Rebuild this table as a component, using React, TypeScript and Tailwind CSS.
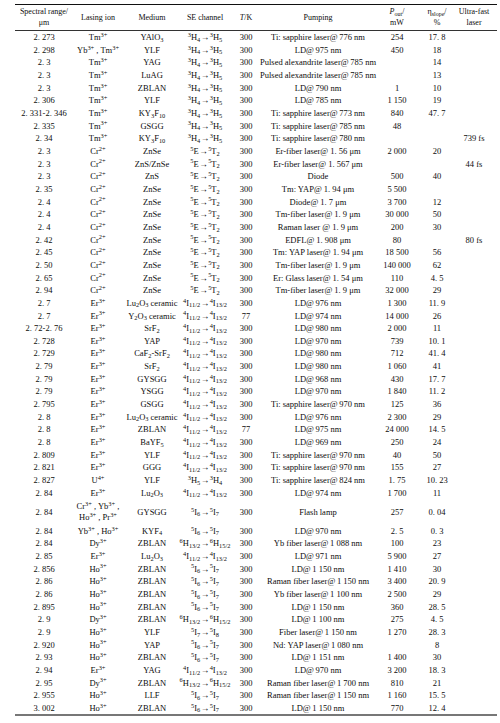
import React from "react";

type Cell = React.ReactNode;
type Row = { c: Cell[]; tall?: boolean };

const sup = (s: string) => <sup>{s}</sup>;
const sub = (s: string) => <sub>{s}</sub>;
const ion = (el: string, ch: string) => (
  <>
    {el}
    {sup(ch)}
  </>
);

const Tm = ion("Tm", "3+");
const Cr = ion("Cr", "2+");
const Er = ion("Er", "3+");
const Ho = ion("Ho", "3+");
const Dy = ion("Dy", "3+");
const U = ion("U", "4+");

const se = (a: string, A: string, sa: string, b: string, B: string, sb: string) => (
  <>
    {sup(a)}
    {A}
    {sub(sa)}
    <span className="mx-[0.5px]">→</span>
    {sup(b)}
    {B}
    {sub(sb)}
  </>
);

const TH = se("3", "H", "4", "3", "H", "5");
const CR = se("5", "E", "", "5", "T", "2");
const ER = se("4", "I", "11/2", "4", "I", "13/2");
const UH = se("3", "H", "5", "3", "H", "4");
const HO = se("5", "I", "6", "5", "I", "7");
const HO2 = se("5", "I", "7", "5", "I", "8");
const DY = se("6", "H", "13/2", "6", "H", "15/2");

const f = (parts: (string | [string])[]) => (
  <>
    {parts.map((p, i) =>
      typeof p === "string" ? <React.Fragment key={i}>{p}</React.Fragment> : <sub key={i}>{p[0]}</sub>
    )}
  </>
);

const YAlO3 = f(["YAlO", ["3"]]);
const KY3F10 = f(["KY", ["3"], "F", ["10"]]);
const Lu2O3 = f(["Lu", ["2"], "O", ["3"]]);
const Lu2O3c = f(["Lu", ["2"], "O", ["3"], " ceramic"]);
const Y2O3c = f(["Y", ["2"], "O", ["3"], " ceramic"]);
const SrF2 = f(["SrF", ["2"]]);
const CaSr = f(["CaF", ["2"], "-SrF", ["2"]]);
const BaYF5 = f(["BaYF", ["5"]]);
const KYF4 = f(["KYF", ["4"]]);

const th = "\u2009";

const rows: Row[] = [
  { c: ["2. 273", Tm, YAlO3, TH, "300", `Ti: sapphire laser@${th}776 nm`, "254", "17. 8", ""] },
  { c: ["2. 298", <>Yb{sup("3+")} , Tm{sup("3+")}</>, "YLF", TH, "300", `LD@${th}975 nm`, "450", "18", ""] },
  { c: ["2. 3", Tm, "YAG", TH, "300", `Pulsed alexandrite laser@${th}785 nm`, "", "14", ""] },
  { c: ["2. 3", Tm, "LuAG", TH, "300", `Pulsed alexandrite laser@${th}785 nm`, "", "13", ""] },
  { c: ["2. 3", Tm, "ZBLAN", TH, "300", `LD@${th}790 nm`, "1", "10", ""] },
  { c: ["2. 306", Tm, "YLF", TH, "300", `LD@${th}785 nm`, "1 150", "19", ""] },
  { c: ["2. 331-2. 346", Tm, KY3F10, TH, "300", `Ti: sapphire laser@${th}773 nm`, "840", "47. 7", ""] },
  { c: ["2. 335", Tm, "GSGG", TH, "300", `Ti: sapphire laser@${th}785 nm`, "48", "", ""] },
  { c: ["2. 34", Tm, KY3F10, TH, "300", `Ti: sapphire laser@${th}780 nm`, "", "", "739 fs"] },
  { c: ["2. 3", Cr, "ZnSe", CR, "300", "Er-fiber laser@ 1. 56 μm", "2 000", "20", ""] },
  { c: ["2. 3", Cr, "ZnS/ZnSe", CR, "300", "Er-fiber laser@ 1. 567 μm", "", "", "44 fs"] },
  { c: ["2. 3", Cr, "ZnS", CR, "300", "Diode", "500", "40", ""] },
  { c: ["2. 35", Cr, "ZnSe", CR, "300", "Tm: YAP@ 1. 94 μm", "5 500", "", ""] },
  { c: ["2. 4", Cr, "ZnSe", CR, "300", "Diode@ 1. 7 μm", "3 700", "12", ""] },
  { c: ["2. 4", Cr, "ZnSe", CR, "300", "Tm-fiber laser@ 1. 9 μm", "30 000", "50", ""] },
  { c: ["2. 4", Cr, "ZnSe", CR, "300", "Raman laser @ 1. 9 μm", "200", "30", ""] },
  { c: ["2. 42", Cr, "ZnSe", CR, "300", "EDFL@ 1. 908 μm", "80", "", "80 fs"] },
  { c: ["2. 45", Cr, "ZnSe", CR, "300", "Tm: YAP laser@ 1. 94 μm", "18 500", "56", ""] },
  { c: ["2. 50", Cr, "ZnSe", CR, "300", "Tm-fiber laser@ 1. 9 μm", "140 000", "62", ""] },
  { c: ["2. 65", Cr, "ZnSe", CR, "300", "Er: Glass laser@ 1. 54 μm", "110", "4. 5", ""] },
  { c: ["2. 94", Cr, "ZnSe", CR, "300", "Tm-fiber laser@ 1. 9 μm", "32 000", "29", ""] },
  { c: ["2. 7", Er, Lu2O3c, ER, "300", `LD@${th}976 nm`, "1 300", "11. 9", ""] },
  { c: ["2. 7", Er, Y2O3c, ER, "77", `LD@${th}974 nm`, "14 000", "26", ""] },
  { c: ["2. 72-2. 76", Er, SrF2, ER, "300", `LD@${th}980 nm`, "2 000", "11", ""] },
  { c: ["2. 728", Er, "YAP", ER, "300", `LD@${th}970 nm`, "739", "10. 1", ""] },
  { c: ["2. 729", Er, CaSr, ER, "300", `LD@${th}980 nm`, "712", "41. 4", ""] },
  { c: ["2. 79", Er, SrF2, ER, "300", `LD@${th}980 nm`, "1 060", "41", ""] },
  { c: ["2. 79", Er, "GYSGG", ER, "300", `LD@${th}968 nm`, "430", "17. 7", ""] },
  { c: ["2. 79", Er, "YSGG", ER, "300", `LD@${th}970 nm`, "1 840", "11. 2", ""] },
  { c: ["2. 795", Er, "GSGG", ER, "300", `Ti: sapphire laser@${th}970 nm`, "125", "36", ""] },
  { c: ["2. 8", Er, Lu2O3c, ER, "300", `LD@${th}976 nm`, "2 300", "29", ""] },
  { c: ["2. 8", Er, "ZBLAN", ER, "77", `LD@${th}975 nm`, "24 000", "14. 5", ""] },
  { c: ["2. 8", Er, BaYF5, ER, "300", `LD@${th}969 nm`, "250", "24", ""] },
  { c: ["2. 809", Er, "YLF", ER, "300", `Ti: sapphire laser@${th}970 nm`, "40", "50", ""] },
  { c: ["2. 821", Er, "GGG", ER, "300", `Ti: sapphire laser@${th}970 nm`, "155", "27", ""] },
  { c: ["2. 827", U, "YLF", UH, "300", `Ti: sapphire laser@${th}824 nm`, "1. 75", "10. 23", ""] },
  { c: ["2. 84", Er, Lu2O3, ER, "300", `LD@${th}974 nm`, "1 700", "11", ""] },
  {
    tall: true,
    c: [
      "2. 84",
      <span className="flex flex-col items-center gap-[3px]">
        <span>
          Cr{sup("3+")} , Yb{sup("3+")} ,
        </span>
        <span>
          Ho{sup("3+")} , Pr{sup("3+")}
        </span>
      </span>,
      "GYSGG",
      HO,
      "300",
      "Flash lamp",
      "257",
      "0. 04",
      "",
    ],
  },
  { c: ["2. 84", <>Yb{sup("3+")} , Ho{sup("3+")}</>, KYF4, HO, "300", `LD@${th}970 nm`, "2. 5", "0. 3", ""] },
  { c: ["2. 84", Dy, "ZBLAN", DY, "300", `Yb fiber laser@${th}1 088 nm`, "100", "23", ""] },
  { c: ["2. 85", Er, Lu2O3, ER, "300", `LD@${th}971 nm`, "5 900", "27", ""] },
  { c: ["2. 856", Ho, "ZBLAN", HO, "300", `LD@${th}1 150 nm`, "1 410", "30", ""] },
  { c: ["2. 86", Ho, "ZBLAN", HO, "300", `Raman fiber laser@${th}1 150 nm`, "3 400", "20. 9", ""] },
  { c: ["2. 86", Ho, "ZBLAN", HO, "300", `Yb fiber laser@${th}1 100 nm`, "2 500", "29", ""] },
  { c: ["2. 895", Ho, "ZBLAN", HO, "300", `LD@${th}1 150 nm`, "360", "28. 5", ""] },
  { c: ["2. 9", Dy, "ZBLAN", DY, "300", `LD@${th}1 100 nm`, "275", "4. 5", ""] },
  { c: ["2. 9", Ho, "YLF", HO2, "300", `Fiber laser@${th}1 150 nm`, "1 270", "28. 3", ""] },
  { c: ["2. 920", Ho, "YAP", HO, "300", `Nd: YAP laser@${th}1 080 nm`, "", "8", ""] },
  { c: ["2. 93", Ho, "ZBLAN", HO, "300", `LD@${th}1 151 nm`, "1 400", "30", ""] },
  { c: ["2. 94", Er, "YAG", ER, "300", `LD@${th}970 nm`, "3 200", "18. 3", ""] },
  { c: ["2. 95", Dy, "ZBLAN", DY, "300", `Raman fiber laser@${th}1 700 nm`, "810", "21", ""] },
  { c: ["2. 955", Ho, "LLF", HO, "300", `Raman fiber laser@${th}1 150 nm`, "1 160", "15. 5", ""] },
  { c: ["3. 002", Ho, "ZBLAN", HO, "300", `LD@${th}1 150 nm`, "770", "12. 4", ""] },
];

const GRID = "grid grid-cols-[58px_50px_58px_48px_34px_110px_48px_32px_42px]";

export default function App() {
  return (
    <div className="w-[500px] h-[723px] bg-white overflow-hidden pt-[4px] pl-[15px] font-['Liberation_Serif',serif] text-[#0d0d0d] text-[8.5px] leading-none">
      <div className="w-[482px] border-t-[1.5px] border-b-[2px] border-t-[#111] border-b-[#777]">
        {/* header */}
        <div className={`${GRID} h-[26px] border-b border-[#333] items-center text-center text-[8px]`}>
          <div className="flex flex-col items-center gap-[3px]">
            <span>Spectral range/</span>
            <span>μm</span>
          </div>
          <div>Lasing ion</div>
          <div>Medium</div>
          <div>SE channel</div>
          <div>
            <i>T</i>/K
          </div>
          <div>Pumping</div>
          <div className="flex flex-col items-center gap-[3px]">
            <span>
              <i>P</i>
              <sub>out</sub>/
            </span>
            <span>mW</span>
          </div>
          <div className="flex flex-col items-center gap-[3px]">
            <span>
              η<sub>slope</sub>/
            </span>
            <span>%</span>
          </div>
          <div className="flex flex-col items-center gap-[3px]">
            <span>Ultra-fast</span>
            <span>laser</span>
          </div>
        </div>
        {/* body */}
        <div>
          {rows.map((r, i) => (
            <div key={i} className={`${GRID} ${r.tall ? "h-[25.34px]" : "h-[12.67px]"} items-center text-center`}>
              {r.c.map((cell, j) => (
                <div key={j} className="flex items-center justify-center whitespace-pre">
                  <span>{cell}</span>
                </div>
              ))}
            </div>
          ))}
        </div>
      </div>
    </div>
  );
}
